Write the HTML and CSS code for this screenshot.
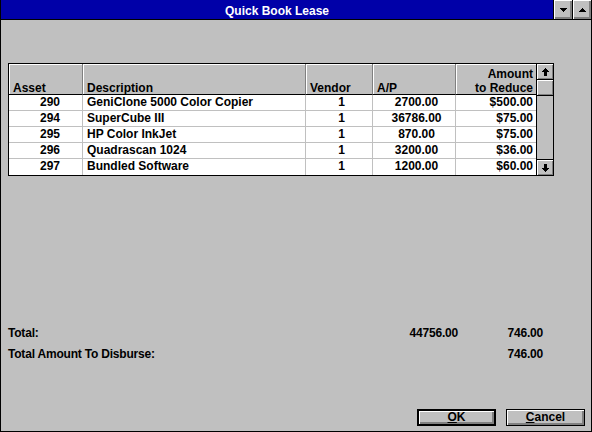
FILE: index.html
```html
<!DOCTYPE html>
<html>
<head>
<meta charset="utf-8">
<title>Quick Book Lease</title>
<link rel="stylesheet" href="styles.css">
</head>
<body>
<div class="window">
  <div class="titlebar">
    <div class="title">Quick Book Lease</div>
    <div class="tbtn">
      <svg width="7" height="4" viewBox="0 0 7 4" shape-rendering="crispEdges"><polygon points="0,0 7,0 3.5,4" fill="#000"/></svg>
    </div>
    <div class="tbtn">
      <svg width="7" height="4" viewBox="0 0 7 4" shape-rendering="crispEdges"><polygon points="3.5,0 7,4 0,4" fill="#000"/></svg>
    </div>
  </div>
  <div class="client">
    <div class="gridwrap">
      <div class="grid">
        <div class="hc"><span>Asset</span></div>
        <div class="hc"><span>Description</span></div>
        <div class="hc"><span>Vendor</span></div>
        <div class="hc"><span>A/P</span></div>
        <div class="hc right"><span>Amount</span><span>to Reduce</span></div>

        <div class="c asset">290</div><div class="c desc">GeniClone 5000 Color Copier</div><div class="c mid">1</div><div class="c mid">2700.00</div><div class="c amt">$500.00</div>
        <div class="c asset">294</div><div class="c desc">SuperCube III</div><div class="c mid">1</div><div class="c mid">36786.00</div><div class="c amt">$75.00</div>
        <div class="c asset">295</div><div class="c desc">HP Color InkJet</div><div class="c mid">1</div><div class="c mid">870.00</div><div class="c amt">$75.00</div>
        <div class="c asset">296</div><div class="c desc">Quadrascan 1024</div><div class="c mid">1</div><div class="c mid">3200.00</div><div class="c amt">$36.00</div>
        <div class="c asset last">297</div><div class="c desc last">Bundled Software</div><div class="c mid last">1</div><div class="c mid last">1200.00</div><div class="c amt last">$60.00</div>
      </div>
      <div class="vscroll">
        <div class="sbtn up">
          <svg width="7" height="8" viewBox="0 0 7 8" shape-rendering="crispEdges"><polygon points="3.5,0 7,4 5,4 5,8 2,8 2,4 0,4" fill="#000"/></svg>
        </div>
        <div class="thumb"></div>
        <div class="track"></div>
        <div class="sbtn down">
          <svg width="7" height="8" viewBox="0 0 7 8" shape-rendering="crispEdges"><polygon points="2,0 5,0 5,4 7,4 3.5,8 0,4 2,4" fill="#000"/></svg>
        </div>
      </div>
    </div>

    <div class="totals">
      <div class="tlabel">Total:</div><div class="tval">44756.00</div><div class="tval">746.00</div>
      <div class="tlabel">Total Amount To Disburse:</div><div class="tval"></div><div class="tval">746.00</div>
    </div>

    <div class="buttons">
      <div class="btn default"><span class="ul">O</span>K</div>
      <div class="btn"><span class="ul">C</span>ancel</div>
    </div>
  </div>
</div>
</body>
</html>
```

FILE: styles.css
```css
* { box-sizing: border-box; }

html, body {
  margin: 0;
  padding: 0;
  background: #c0c0c0;
}

body {
  font-family: "Liberation Sans", Arial, sans-serif;
  font-weight: bold;
  font-size: 12px;
  color: #000;
}

.window {
  width: 592px;
  height: 432px;
  background: #c0c0c0;
  border-left: 1px solid #000;
  border-right: 1px solid #000;
  border-bottom: 1px solid #000;
  display: flex;
  flex-direction: column;
}

.titlebar {
  height: 20px;
  background: #0000a8;
  border-bottom: 1px solid #000;
  display: flex;
}

.title {
  flex: 1;
  color: #fff;
  text-align: center;
  line-height: 19px;
  padding-top: 2px;
  font-size: 12px;
}

.tbtn {
  width: 19px;
  height: 19px;
  background: #c0c0c0;
  border-left: 1px solid #000;
  box-shadow: inset 1px 1px #fff, inset -1px -1px #808080, inset -2px -2px #808080;
  display: flex;
  align-items: center;
  justify-content: center;
}

.tbtn svg { display: block; }

.client {
  flex: 1;
  display: flex;
  flex-direction: column;
  padding: 43px 6px 5px 7px;
}

.gridwrap {
  display: flex;
  width: 546px;
  border: 1px solid #000;
  background: #fff;
}

.grid {
  display: grid;
  grid-template-columns: 74px 223px 67px 83px 80px;
  grid-auto-rows: 16px;
  grid-template-rows: 31px;
}

.hc {
  background: #c0c0c0;
  border-right: 1px solid #808080;
  border-bottom: 1px solid #000;
  box-shadow: inset 1px 1px #fff;
  display: flex;
  flex-direction: column;
  justify-content: flex-end;
  padding: 0 3px 0 4px;
  line-height: 14px;
}

.hc span:last-child {
  margin-bottom: -1px;
}

.hc.right {
  align-items: flex-end;
  border-right: none;
}

.c {
  border-right: 1px solid #c0c0c0;
  border-bottom: 1px solid #c0c0c0;
  line-height: 15px;
  white-space: nowrap;
  overflow: hidden;
}

.c.last {
  border-bottom: none;
}

.asset {
  text-align: right;
  padding-right: 22px;
}

.desc {
  padding-left: 4px;
}

.mid {
  text-align: center;
  padding-left: 5px;
}

.amt {
  text-align: right;
  padding-right: 3px;
  border-right: none;
}

.vscroll {
  width: 17px;
  border-left: 1px solid #000;
  background: #c0c0c0;
  display: flex;
  flex-direction: column;
}

.sbtn {
  height: 16px;
  display: flex;
  align-items: center;
  justify-content: center;
  box-shadow: inset 1px 1px #fff, inset -1px -1px #808080;
}

.sbtn.up {
  border-bottom: 1px solid #000;
}

.sbtn.down {
  border-top: 1px solid #000;
}

.sbtn svg { display: block; }

.thumb {
  height: 16px;
  border-bottom: 1px solid #000;
  box-shadow: inset 1px 1px #fff, inset -1px -1px #808080;
}

.track {
  flex: 1;
  background: #c0c0c0;
}

.totals {
  margin-top: 150px;
  display: grid;
  grid-template-columns: 390px 60px 85px;
  grid-auto-rows: 21px;
  line-height: 14px;
}

.tlabel {
  letter-spacing: -0.2px;
}

.tval {
  text-align: right;
  letter-spacing: -0.2px;
}

.buttons {
  margin-top: auto;
  display: flex;
  justify-content: flex-end;
  gap: 10px;
}

.btn {
  width: 79px;
  height: 17px;
  border: 1px solid #000;
  background: #c0c0c0;
  box-shadow: inset 1px 1px #fff, inset -1px -1px #808080, inset -2px -2px #808080;
  text-align: center;
  line-height: 14px;
  font-size: 12px;
}

.btn.default {
  border-width: 2px;
  line-height: 12px;
}

.ul {
  text-decoration: underline;
}
```
